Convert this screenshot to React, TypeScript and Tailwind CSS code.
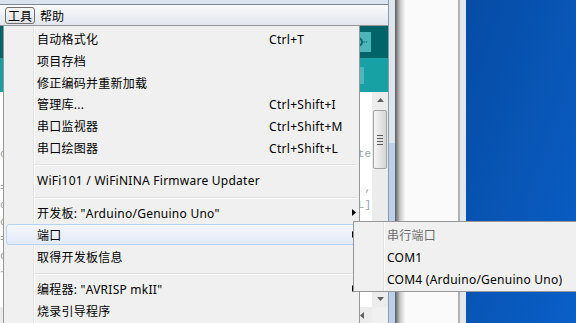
import React from "react";

type MenuItem =
  | { label: string; shortcut?: string; arrow?: boolean; active?: boolean; disabled?: boolean }
  | "sep";

const toolsMenu: MenuItem[] = [
  { label: "自动格式化", shortcut: "Ctrl+T" },
  { label: "项目存档" },
  { label: "修正编码并重新加载" },
  { label: "管理库...", shortcut: "Ctrl+Shift+I" },
  { label: "串口监视器", shortcut: "Ctrl+Shift+M" },
  { label: "串口绘图器", shortcut: "Ctrl+Shift+L" },
  "sep",
  { label: "WiFi101 / WiFiNINA Firmware Updater" },
  "sep",
  { label: '开发板: "Arduino/Genuino Uno"', arrow: true },
  { label: "端口", arrow: true, active: true },
  { label: "取得开发板信息" },
  "sep",
  { label: '编程器: "AVRISP mkII"', arrow: true },
  { label: "烧录引导程序" },
];

const portMenu: MenuItem[] = [
  { label: "串行端口", disabled: true },
  { label: "COM1" },
  { label: "COM4 (Arduino/Genuino Uno)" },
];

// code lines behind the menu: [left edge char, right edge chars]
const codeLines: [string, string][] = [
  ["", ""],
  ["", ""],
  ["", ""],
  ["c", "te"],
  ["", ""],
  ["=", ","],
  ["c", "L]"],
  ["c", ""],
  ["=", ""],
  ["c", ""],
  ["~", ""],
  ["", ""],
];

function Arrow() {
  return (
    <svg width="4" height="7" viewBox="0 0 4 7" className="ml-auto shrink-0">
      <path d="M0 0L4 3.5L0 7Z" fill="#000" />
    </svg>
  );
}

function Menu({ items, className }: { items: MenuItem[]; className: string }) {
  return (
    <div className={`absolute bg-[#f0f0f0] border border-[#979797] pt-[2px] pb-[2px] ${className}`}>
      <div className="absolute top-0 bottom-0 left-[29px] w-[2px] border-l border-l-[#e2e3e3] border-r border-r-white" />
      {items.map((it, i) =>
        it === "sep" ? (
          <div key={i} className="relative h-[11px] pt-[6px] ml-[30px] mr-[2px]">
            <div className="h-[2px] border-t border-t-[#e0e0e0] border-b border-b-white" />
          </div>
        ) : (
          <div
            key={i}
            className={`relative flex items-center h-[21.7px] mx-[2px] pl-[30px] border rounded-[3px] ${
              it.active
                ? "border-[#b4d2f3] bg-linear-to-b from-[#f4f7fc] to-[#e3eaf6]"
                : "border-transparent"
            }`}
          >
            <span
              className={`w-[232px] shrink-0 whitespace-nowrap pt-[3px] tracking-[0.25px] ${
                it.disabled ? "text-[#6d6d6d]" : "text-black"
              }`}
            >
              {it.label}
            </span>
            {it.shortcut && (
              <span className="whitespace-nowrap pt-[3px] tracking-[0.3px] text-black">{it.shortcut}</span>
            )}
            {it.arrow && <Arrow />}
          </div>
        )
      )}
    </div>
  );
}

function ScrollArrow({ dir }: { dir: "up" | "down" | "left" }) {
  const d = dir === "up" ? "M0 4L3.5 0L7 4Z" : dir === "down" ? "M0 0L7 0L3.5 4Z" : "M4 0L4 7L0 3.5Z";
  const box = dir === "left" ? "0 0 4 7" : "0 0 7 4";
  return (
    <svg width={dir === "left" ? 4 : 7} height={dir === "left" ? 7 : 4} viewBox={box}>
      <path d={d} fill="#606060" />
    </svg>
  );
}

export default function App() {
  return (
    <div className="relative w-[576px] h-[323px] overflow-hidden flex font-['Noto_Sans','Noto_Sans_CJK_SC',sans-serif] text-[12px] leading-none">
      {/* IDE window */}
      <div className="w-[388px] h-full flex flex-col shrink-0">
        <div className="h-[4px] bg-[#dae4f0]" />
        <div className="h-[1px] bg-[#7d8894]" />
        <div className="h-[21px] flex items-center pt-[1px] border-b border-b-[#979797] bg-linear-to-b from-[#fafbfd] to-[#e2e5ee]">
          <div className="ml-[5px] w-[30px] h-[17px] flex items-center justify-center pt-[2px] rounded-[3px] border border-[#707070] bg-linear-to-b from-[#f7f7f8] to-[#e3e4e8]">
            工具
          </div>
          <div className="ml-[5px] pt-[2px]">帮助</div>
        </div>
        <div className="flex-1 flex flex-col">
          <div className="h-[32px] bg-[#006468] flex items-center justify-end pr-[17px]">
            <div className="w-[30px] h-[20px] bg-[#4db6b9] flex items-center justify-end pr-[2px]">
              <svg width="14" height="12" viewBox="0 0 14 12">
                <circle cx="3" cy="6" r="4" fill="none" stroke="#0b6b6e" strokeWidth="2" />
                <circle cx="9" cy="6" r="0.8" fill="#0b6b6e" />
                <circle cx="11.5" cy="6" r="0.8" fill="#0b6b6e" />
              </svg>
            </div>
          </div>
          <div className="h-[34px] bg-[#17a1a5] flex items-center justify-end pr-[24px]">
            <div className="w-[20px] h-[17px] bg-[#4cb8bc]" />
          </div>
          <div className="flex-1 flex">
            <div className="flex-1 bg-white pt-[3px] font-['Liberation_Mono',monospace] text-[11px] text-[#95a5a6]">
              {codeLines.map(([l, r], i) => (
                <div key={i} className="h-[17px] flex items-center justify-between pr-[1px]">
                  <span>{l}</span>
                  <span>{r}</span>
                </div>
              ))}
            </div>
            <div className="w-[16px] flex flex-col bg-[#ececec]">
              <div className="h-[16px] flex items-center justify-center">
                <ScrollArrow dir="up" />
              </div>
              <div className="mt-[2px] h-[59px] mx-[1px] rounded-[2px] border border-[#a3a3a3] bg-linear-to-r from-[#f5f5f5] to-[#d6d6d6] flex flex-col items-center justify-center gap-[2px]">
                <div className="w-[6px] h-px bg-[#5a5a5a]" />
                <div className="w-[6px] h-px bg-[#5a5a5a]" />
                <div className="w-[6px] h-px bg-[#5a5a5a]" />
                <div className="w-[6px] h-px bg-[#5a5a5a]" />
              </div>
              <div className="flex-1" />
              <div className="h-[16px] flex items-center justify-center">
                <ScrollArrow dir="down" />
              </div>
            </div>
          </div>
          <div className="h-[16px] flex bg-[#ececec]">
            <div className="flex-1 flex items-center justify-end pr-[8px]">
              <ScrollArrow dir="left" />
            </div>
            <div className="w-[16px] bg-[#f0f0f0]" />
          </div>
        </div>
      </div>
      <div className="w-px bg-[#8d9aa8]" />
      <div className="w-[6px] flex flex-col">
        <div className="h-[143px] bg-[#dfe5ec]" />
        <div className="flex-1 bg-[#b9d1ec]" />
      </div>
      <div className="w-[10px] bg-linear-to-r from-[#5c5c5c] via-[#c8c8c8] to-[#f6f6f6]" />
      <div className="w-[53px] bg-[#fafafa]" />
      <div className="w-[2px] bg-[#b2b2b2]" />
      <div className="w-[6px] bg-[#e3e8ee]" />
      <div className="flex-1 bg-linear-to-br from-[#064ca4] to-[#0a5fc8]" />

      {/* Tools menu */}
      <Menu items={toolsMenu} className="left-[3px] top-[25px] w-[357px] h-[320px]" />
      {/* Port submenu */}
      <Menu items={portMenu} className="left-[353px] top-[221px] w-[240px]" />
    </div>
  );
}
